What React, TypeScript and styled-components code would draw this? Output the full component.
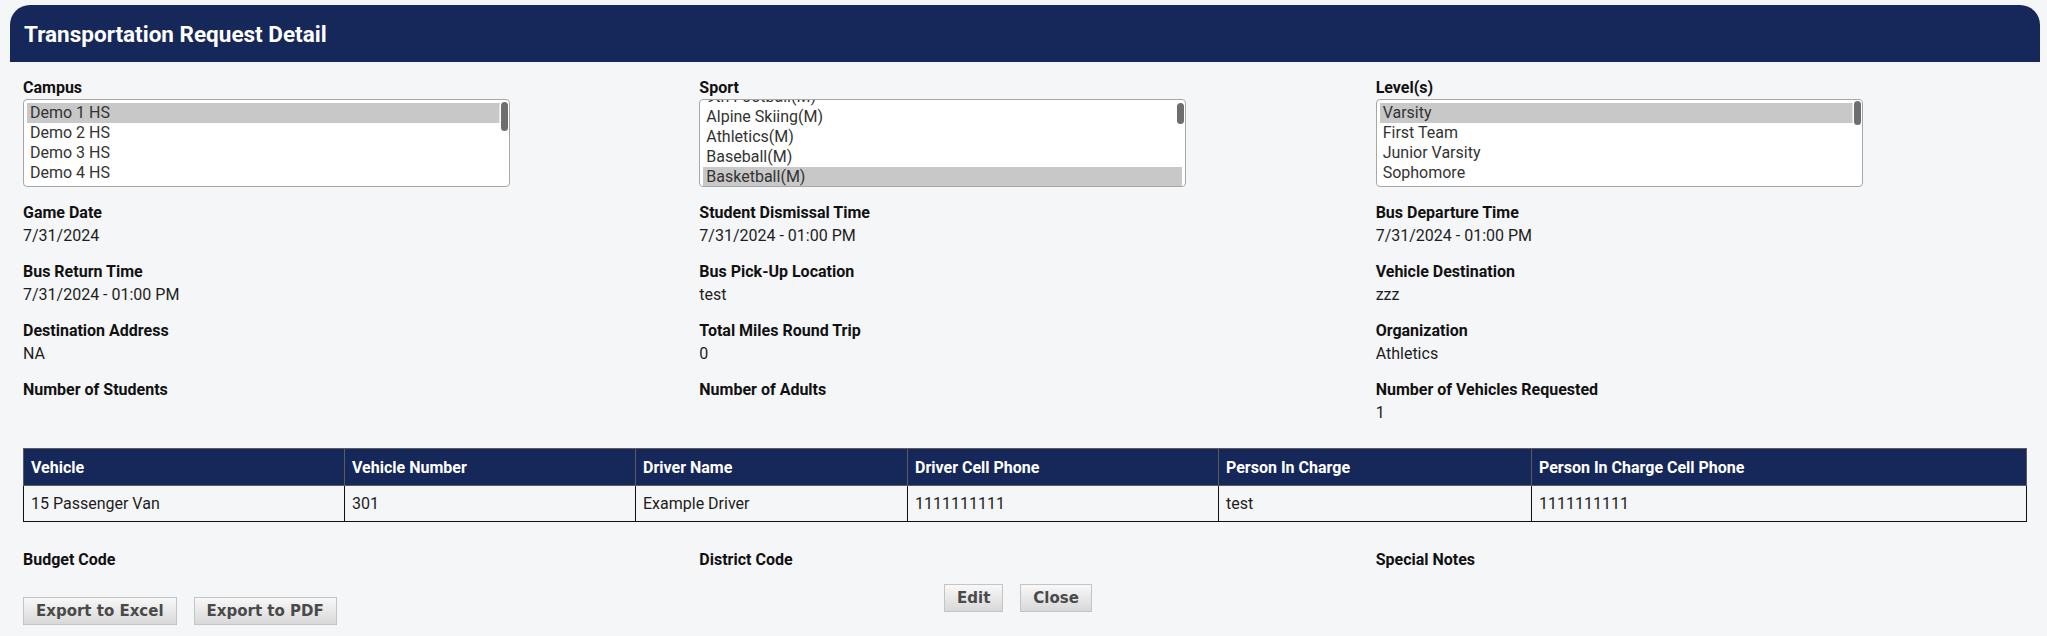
import styled, { createGlobalStyle } from 'styled-components';

type Field = { label: string; value?: string };

const campuses = ['Demo 1 HS', 'Demo 2 HS', 'Demo 3 HS', 'Demo 4 HS'];
const sports = ['9th Football(M)', 'Alpine Skiing(M)', 'Athletics(M)', 'Baseball(M)', 'Basketball(M)'];
const levels = ['Varsity', 'First Team', 'Junior Varsity', 'Sophomore', 'Freshman'];

const fields: Field[] = [
  { label: 'Game Date', value: '7/31/2024' },
  { label: 'Student Dismissal Time', value: '7/31/2024 - 01:00 PM' },
  { label: 'Bus Departure Time', value: '7/31/2024 - 01:00 PM' },
  { label: 'Bus Return Time', value: '7/31/2024 - 01:00 PM' },
  { label: 'Bus Pick-Up Location', value: 'test' },
  { label: 'Vehicle Destination', value: 'zzz' },
  { label: 'Destination Address', value: 'NA' },
  { label: 'Total Miles Round Trip', value: '0' },
  { label: 'Organization', value: 'Athletics' },
  { label: 'Number of Students' },
  { label: 'Number of Adults' },
  { label: 'Number of Vehicles Requested', value: '1' },
];

const codes: Field[] = [{ label: 'Budget Code' }, { label: 'District Code' }, { label: 'Special Notes' }];

const vehicleColumns = [
  { title: 'Vehicle', width: 321 },
  { title: 'Vehicle Number', width: 291 },
  { title: 'Driver Name', width: 272 },
  { title: 'Driver Cell Phone', width: 311 },
  { title: 'Person In Charge', width: 313 },
  { title: 'Person In Charge Cell Phone', width: 495 },
];

const vehicles = [['15 Passenger Van', '301', 'Example Driver', '1111111111', 'test', '1111111111']];

type ListBoxProps = {
  options: string[];
  selected: string;
  scroll?: number;
  thumbTop: number;
  thumbHeight: number;
};

// read-only multi select, drawn as a list with an overlay scrollbar
const ListBox = ({ options, selected, scroll = 0, thumbTop, thumbHeight }: ListBoxProps) => (
  <ListFrame>
    <ListInner $scroll={scroll}>
      {options.map(option => (
        <ListOption key={option} $selected={option === selected}>
          {option}
        </ListOption>
      ))}
    </ListInner>
    <ScrollThumb $top={thumbTop} $height={thumbHeight} />
  </ListFrame>
);

const App = () => {
  return (
    <>
      <GlobalStyle />
      <Page>
        <TitleBar>
          <Title>Transportation Request Detail</Title>
        </TitleBar>
        <Body>
          <FieldGrid>
            <FieldItem>
              <Label>Campus</Label>
              <ListBox options={campuses} selected="Demo 1 HS" thumbTop={2} thumbHeight={29} />
            </FieldItem>
            <FieldItem>
              <Label>Sport</Label>
              <ListBox options={sports} selected="Basketball(M)" scroll={16} thumbTop={3} thumbHeight={21} />
            </FieldItem>
            <FieldItem>
              <Label>Level(s)</Label>
              <ListBox options={levels} selected="Varsity" thumbTop={1} thumbHeight={24} />
            </FieldItem>
            {fields.map(field => (
              <FieldItem key={field.label}>
                <Label>{field.label}</Label>
                {field.value && <Value>{field.value}</Value>}
              </FieldItem>
            ))}
          </FieldGrid>

          <VehicleTable>
            <colgroup>
              {vehicleColumns.map(col => (
                <Col key={col.title} $width={col.width} />
              ))}
            </colgroup>
            <thead>
              <tr>
                {vehicleColumns.map(col => (
                  <HeadCell key={col.title}>{col.title}</HeadCell>
                ))}
              </tr>
            </thead>
            <tbody>
              {vehicles.map((row, idx) => (
                <tr key={idx}>
                  {row.map((cell, cellIdx) => (
                    <BodyCell key={cellIdx}>{cell}</BodyCell>
                  ))}
                </tr>
              ))}
            </tbody>
          </VehicleTable>

          <CodeGrid>
            {codes.map(code => (
              <FieldItem key={code.label}>
                <Label>{code.label}</Label>
              </FieldItem>
            ))}
          </CodeGrid>

          <Actions>
            <ExportGroup>
              <GrayButton>Export to Excel</GrayButton>
              <GrayButton>Export to PDF</GrayButton>
            </ExportGroup>
            <FormGroup>
              <GrayButton>Edit</GrayButton>
              <GrayButton>Close</GrayButton>
            </FormGroup>
          </Actions>
        </Body>
      </Page>
    </>
  );
};

export default App;

const GlobalStyle = createGlobalStyle`
  html, body {
    margin: 0;
    background: #f5f6f8;
  }
  body {
    font-family: Roboto, 'Liberation Sans', sans-serif;
    font-size: 16px;
    color: #1d1d1d;
  }
  * {
    box-sizing: border-box;
  }
`;

const Page = styled.div`
  padding: 5px 7px 0 10px;
`;

const TitleBar = styled.header`
  height: 57px;
  display: flex;
  align-items: center;
  padding-left: 14px;
  background: #16275a;
  border-radius: 20px 20px 0 0;
`;

const Title = styled.h1`
  margin: 0;
  color: #fff;
  font-size: 22.5px;
  font-weight: 700;
`;

const Body = styled.div`
  padding: 14px 14px 0 13px;
`;

const FieldGrid = styled.div`
  display: grid;
  grid-template-columns: repeat(3, 1fr);
  column-gap: 26px;
  row-gap: 13px;
  align-items: start;
`;

const FieldItem = styled.div`
  display: flex;
  flex-direction: column;
  align-items: flex-start;
`;

const Label = styled.div`
  font-weight: 700;
  line-height: 23px;
  color: #111;
`;

const Value = styled.div`
  line-height: 23px;
  color: #1d1d1d;
`;

const ListFrame = styled.div`
  position: relative;
  width: 487px;
  height: 88px;
  margin-bottom: 1px;
  padding: 3px;
  overflow: hidden;
  background: #fff;
  border: 1px solid #a7a7a7;
  border-radius: 4px;
`;

const ListInner = styled.div<{ $scroll: number }>`
  margin-top: ${props => -props.$scroll}px;
`;

const ListOption = styled.div<{ $selected: boolean }>`
  height: 20px;
  padding-left: 3px;
  line-height: 20px;
  color: #333;
  white-space: nowrap;
  background: ${props => (props.$selected ? '#c8c8c8' : 'transparent')};
`;

const ScrollThumb = styled.span<{ $top: number; $height: number }>`
  position: absolute;
  top: ${props => props.$top}px;
  right: 1px;
  width: 7px;
  height: ${props => props.$height}px;
  border-radius: 4px;
  background: #6e6e6e;
  box-shadow: 0 0 0 1.5px #fff;
`;

const VehicleTable = styled.table`
  width: 2003px;
  margin-top: 24px;
  border-collapse: collapse;
  table-layout: fixed;
`;

const Col = styled.col<{ $width: number }>`
  width: ${props => props.$width}px;
`;

const HeadCell = styled.th`
  height: 37px;
  padding: 0 7px;
  text-align: left;
  font-weight: 700;
  color: #fff;
  background: #16275a;
  border: 1px solid #5c5c5c;
`;

const BodyCell = styled.td`
  height: 36px;
  padding: 0 7px;
  color: #1d1d1d;
  border: 1px solid #111;
`;

const CodeGrid = styled(FieldGrid)`
  margin-top: 26px;
`;

const Actions = styled.div`
  display: grid;
  grid-template-columns: 1fr auto 1fr;
  align-items: start;
`;

const ExportGroup = styled.div`
  display: flex;
  gap: 17px;
  margin-top: 26px;
`;

const FormGroup = styled.div`
  display: flex;
  gap: 17px;
  padding-right: 13px;
  margin-top: 13px;
`;

const GrayButton = styled.button`
  height: 28px;
  padding: 0 12px;
  font-family: 'DejaVu Sans', Verdana, sans-serif;
  font-size: 15px;
  font-weight: 700;
  line-height: 26px;
  color: #4a4a4a;
  background: linear-gradient(#f8f8f8, #d8d8d8);
  border: 1px solid #c4c4c4;
  border-radius: 0;
  cursor: pointer;
`;
